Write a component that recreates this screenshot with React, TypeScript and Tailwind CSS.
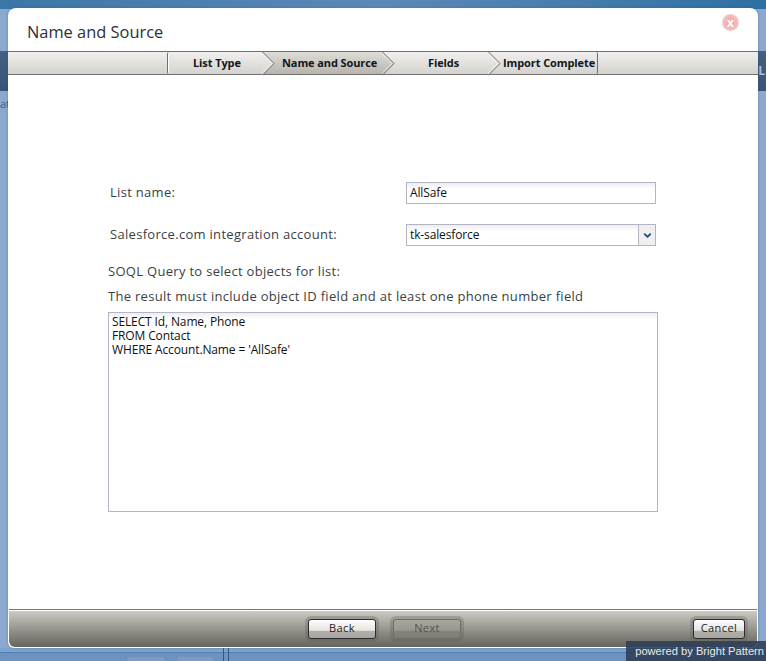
import { ChevronDown } from "lucide-react";

const steps = [
    { label: "List Type", width: "w-[95px]", active: false, textClass: "pl-[25px]" },
    { label: "Name and Source", width: "w-[120px]", active: true, textClass: "pl-[19px]" },
    { label: "Fields", width: "w-[106px]", active: false, textClass: "pl-[45px]" },
    { label: "Import Complete", width: "w-[108px]", active: false, textClass: "pl-[14px]" },
];

const label = "text-[13px] tracking-[0.3px] text-[#3a3f44]";
const field = "border border-[#b4b4c4] bg-linear-to-b from-[#eeeeee] to-white to-[6px] text-[12px] tracking-[-0.13px] text-[#111]";
const query = "SELECT Id, Name, Phone\nFROM Contact\nWHERE Account.Name = 'AllSafe'";

function StepArrow({ id, from, to }: { id: string; from: string; to: string }) {
    return (
        <svg className="absolute top-[-1px] right-[-12px] z-10" width="13" height="25" viewBox="0 0 13 25">
            <defs>
                <linearGradient id={id} x1="0" y1="0" x2="0" y2="1">
                    <stop offset="0" stopColor={from} />
                    <stop offset="1" stopColor={to} />
                </linearGradient>
            </defs>
            <path d="M0 0.5 L12 12.5 L0 24.5 Z" fill={`url(#${id})`} />
            <path d="M0 0.5 L12 12.5 L0 24.5" fill="none" stroke="#6f6f6f" strokeWidth="1" />
            <path d="M0 2.5 L10 12.5 L0 22.5" fill="none" stroke="#ffffff" strokeWidth="1" opacity="0.7" />
        </svg>
    );
}

function DialogButton({ text, disabled, width }: { text: string; disabled?: boolean; width: string }) {
    return (
        <div className="rounded-[6px] bg-[#5d5c55]/30 p-[3px]">
            <div
                className={`${width} flex h-[20px] items-center justify-center rounded-[3px] border text-[11px] tracking-[0.4px] ${
                    disabled
                        ? "border-[#6e6d67] bg-[linear-gradient(#a8a69f_0%,#98968f_58%,#84837c_60%,#7d7c75_100%)] text-[#55544f]"
                        : "border-[#2c2c2c] bg-[linear-gradient(#ffffff_0%,#e4e3df_58%,#b2b1ab_60%,#a6a59f_100%)] text-[#222]"
                }`}
            >
                {text}
            </div>
        </div>
    );
}

export default function App() {
    return (
        <div className="relative flex h-[661px] w-[766px] flex-col overflow-hidden bg-[#8aa8d0] font-['Open_Sans',sans-serif]">
            <div className="h-[9px] shrink-0 bg-linear-to-r from-[#3b76a8] via-[#5c8ab8] to-[#2d70a3]" />
            <div className="mt-[42px] flex h-[40px] shrink-0 items-center justify-end bg-linear-to-b from-[#44607f] to-[#37557a] pr-[1px] text-[12px] font-bold text-[#a9c0dc]">
                L
            </div>
            <div className="mt-[5px] text-[11px] leading-[16px] text-[#2f5d90]">at</div>
            <div className="flex-1" />
            <div className="flex h-[13px] shrink-0 border-t-[4px] border-[#7ea3cf] bg-[#6e92bf] shadow-[inset_0_1px_0_#4f7fb0]">
                <div className="flex w-[223px] items-end gap-[12px] pl-[127px]">
                    <span className="h-[4px] w-[38px] rounded-t-[4px] bg-[#7c9cc6]" />
                    <span className="h-[4px] w-[37px] rounded-t-[4px] bg-[#7c9cc6]" />
                </div>
                <div className="mt-[-4px] h-[13px] w-[6px] border-x border-[#2c5a8c]" />
            </div>

            <div className="absolute top-[8px] left-[8px] flex h-[640px] w-[750px] flex-col rounded-t-[8px] rounded-b-[6px] bg-white pb-[1px] shadow-[0_0_3px_rgba(50,70,110,0.35)]">
                <div className="relative h-[43px] shrink-0">
                    <h1 className="pt-[12px] pl-[19px] text-[16.4px] leading-[24px] text-[#2b3138]">Name and Source</h1>
                    <div className="absolute top-[6px] right-[19px] flex h-[17px] w-[17px] items-center justify-center rounded-full bg-[radial-gradient(circle,#eea0a0_0%,#f3bcbc_55%,#fbe6e6_100%)] text-[12px] font-bold leading-none text-white">
                        x
                    </div>
                </div>

                <div className="flex h-[24px] shrink-0 border-y border-[#6f6f6f] bg-linear-to-b from-[#f1f0ef] to-[#d3d2cd] pl-[159px]">
                    <div className="flex rounded-[2px] border-x border-[#6f6f6f] shadow-[inset_1px_0_0_#fff]">
                        {steps.map((step, i) => (
                            <div
                                key={step.label}
                                className={`relative ${step.width} ${
                                    step.active ? "bg-linear-to-b from-[#dfddd8] to-[#b8b4ac]" : ""
                                } flex items-center ${step.textClass} text-[11px] font-bold tracking-[-0.1px] whitespace-nowrap text-[#10161c]`}
                            >
                                {step.label}
                                {i < 3 && (
                                    <StepArrow
                                        id={`arrow-${i}`}
                                        from={step.active ? "#dfddd8" : "#f1f0ef"}
                                        to={step.active ? "#b8b4ac" : "#d3d2cd"}
                                    />
                                )}
                            </div>
                        ))}
                    </div>
                </div>

                <div className="flex flex-1 flex-col pt-[107px] pl-[100px]">
                    <div className="flex h-[22px] items-center">
                        <span className={`${label} w-[298px] pl-[2px]`}>List name:</span>
                        <div className={`${field} flex h-[22px] w-[250px] items-center pl-[3px]`}>AllSafe</div>
                    </div>
                    <div className="mt-[20px] flex h-[22px] items-center">
                        <span className={`${label} w-[298px] pl-[2px]`}>Salesforce.com integration account:</span>
                        <div className={`${field} flex h-[22px] w-[250px] items-center justify-between pl-[3px]`}>
                            tk-salesforce
                            <span className="flex h-full w-[17px] items-center justify-center border-l border-[#b4b4c4] bg-[#f0eeee]">
                                <ChevronDown size={11} strokeWidth={4} className="text-[#1f4a80]" />
                            </span>
                        </div>
                    </div>
                    <p className={`${label} mt-[16px] h-[18px] leading-[18px]`}>SOQL Query to select objects for list:</p>
                    <p className={`${label} mt-[7px] h-[18px] leading-[18px]`}>
                        The result must include object ID field and at least one phone number field
                    </p>
                    <textarea
                        readOnly
                        value={query}
                        className={`${field} mt-[7px] block h-[200px] w-[550px] resize-none pt-[2px] pl-[3px] leading-[14px] outline-none`}
                    />
                </div>

                <div className="mx-[1px] flex h-[38px] shrink-0 items-center justify-between rounded-b-[6px] border-t border-[#77766f] bg-linear-to-b from-[#d0cdc7] to-[#65645d] pr-[9px] pl-[296px] shadow-[inset_0_1px_0_#fff]">
                    <div className="flex gap-[11px]">
                        <DialogButton text="Back" width="w-[68px]" />
                        <DialogButton text="Next" width="w-[68px]" disabled />
                    </div>
                    <DialogButton text="Cancel" width="w-[52px]" />
                </div>
            </div>

            <div className="absolute right-0 bottom-0 flex h-[20px] w-[140px] items-center justify-end bg-[#2f3f58]/90 pr-[2px] font-['Liberation_Sans',sans-serif] text-[11.15px] text-[#e8e8e8]">
                powered by Bright Pattern
            </div>
        </div>
    );
}
